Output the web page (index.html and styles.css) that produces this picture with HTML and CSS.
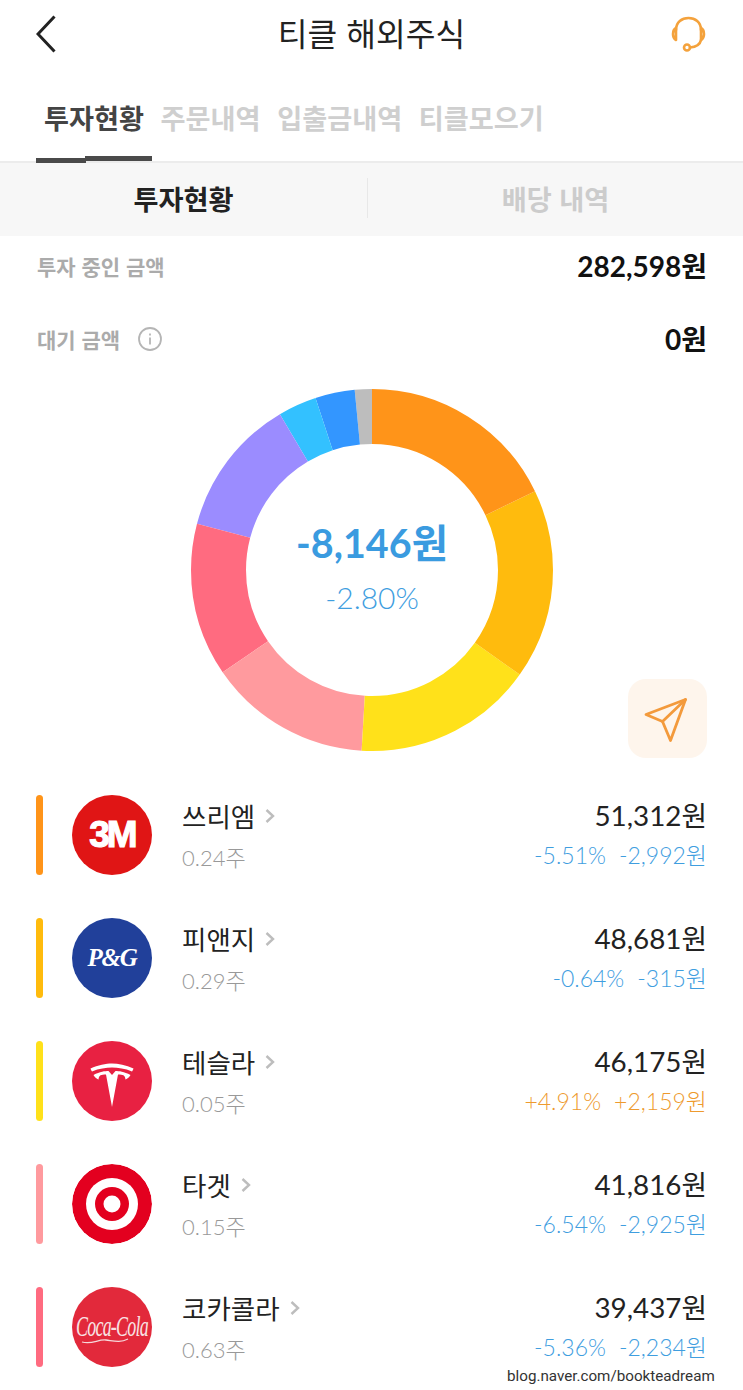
FILE: index.html
```html
<!DOCTYPE html>
<html lang="ko">
<head>
<meta charset="utf-8">
<title>티클 해외주식</title>
<link rel="stylesheet" href="styles.css">
</head>
<body>
<div class="page">
  <header class="topbar">
    <svg class="back" width="20" height="38" viewBox="0 0 20 38"><path d="M18.500 1.500 2 19l16.500 17.500" fill="none" stroke="#222" stroke-width="3"/></svg>
    <h1 class="title">티클 해외주식</h1>
    <svg class="headset" width="38" height="38" viewBox="0 0 38 38" fill="none" stroke="#F4A23C" stroke-width="2.600" stroke-linecap="round" stroke-linejoin="round">
      <path d="M6 15C6 7 12 3 18.500 3S31 7 31 15"/>
      <path d="M6 13C2 15 2 23 6 25z"/>
      <path d="M31 13c4 2 4 10 0 12z"/>
      <path d="M31 25c-1 5-5 7-11 7.500"/>
      <circle cx="17" cy="32.500" r="3"/>
    </svg>
  </header>

  <nav class="tabs">
    <span class="tab tab-on">투자현황</span>
    <span class="tab">주문내역</span>
    <span class="tab">입출금내역</span>
    <span class="tab">티클모으기</span>
  </nav>

  <div class="subtabs">
    <span class="subtab subtab-on">투자현황</span>
    <span class="subtab">배당 내역</span>
  </div>

  <section class="summary">
    <div class="sum-row">
      <span class="sum-label">투자 중인 금액</span>
      <span class="sum-value">282,598원</span>
    </div>
    <div class="sum-row">
      <span class="sum-label">대기 금액
        <svg class="info" width="26" height="26" viewBox="0 0 26 26" fill="none" stroke="#B5B5B5" stroke-width="1.800"><circle cx="13" cy="13" r="11"/><path d="M13 11.500v7"/><path d="M13 7.500v2"/></svg>
      </span>
      <span class="sum-value">0원</span>
    </div>
  </section>

  <section class="chart">
    <div class="donut">
      <svg width="362" height="362" viewBox="0 0 362 362" fill="none" stroke-width="55">
        <g class="ring">
          <circle cx="181" cy="181" r="153.500" pathLength="360" stroke="#BDBDBD" stroke-dasharray="5.500 354.500" stroke-dashoffset="-354.500"/>
          <circle cx="181" cy="181" r="153.500" pathLength="360" stroke="#3396FF" stroke-dasharray="12.700 347.300" stroke-dashoffset="-341.800"/>
          <circle cx="181" cy="181" r="153.500" pathLength="360" stroke="#33C1FF" stroke-dasharray="12.400 347.600" stroke-dashoffset="-329.400"/>
          <circle cx="181" cy="181" r="153.500" pathLength="360" stroke="#9B8CFF" stroke-dasharray="44.600 315.400" stroke-dashoffset="-284.800"/>
          <circle cx="181" cy="181" r="153.500" pathLength="360" stroke="#FF6B80" stroke-dasharray="49.200 310.800" stroke-dashoffset="-235.600"/>
          <circle cx="181" cy="181" r="153.500" pathLength="360" stroke="#FF9A9E" stroke-dasharray="52.300 307.700" stroke-dashoffset="-183.300"/>
          <circle cx="181" cy="181" r="153.500" pathLength="360" stroke="#FFE11A" stroke-dasharray="58 302" stroke-dashoffset="-125.300"/>
          <circle cx="181" cy="181" r="153.500" pathLength="360" stroke="#FFBB0D" stroke-dasharray="61.100 298.900" stroke-dashoffset="-64.200"/>
          <circle cx="181" cy="181" r="153.500" pathLength="360" stroke="#FF9419" stroke-dasharray="64.200 295.800"/>
        </g>
      </svg>
      <div class="donut-center">
        <div class="total">-8,146원</div>
        <div class="total-pct">-2.80%</div>
      </div>
    </div>
    <button class="send" type="button" aria-label="공유">
      <svg width="48" height="48" viewBox="0 0 48 48" fill="none" stroke="#F39A3C" stroke-width="2.800" stroke-linejoin="round" stroke-linecap="round"><path d="M41.500 4.500 2 19.500l16.500 7 8 19z"/><path d="M41.500 4.500 18.500 26.500"/></svg>
    </button>
  </section>

  <ul class="stocks">
    <li class="stock">
      <span class="bar bar-1"></span>
      <span class="logo logo-3m">3M</span>
      <div class="names">
        <div class="name">쓰리엠<svg class="chev" width="10" height="16" viewBox="0 0 10 16"><path d="M1.500 2 8 8l-6.500 6" fill="none" stroke="#BDBDBD" stroke-width="2.400"/></svg></div>
        <div class="qty">0.24주</div>
      </div>
      <div class="nums">
        <div class="amount">51,312원</div>
        <div class="chg down"><span>-5.51%</span><span>-2,992원</span></div>
      </div>
    </li>
    <li class="stock">
      <span class="bar bar-2"></span>
      <span class="logo logo-pg">P&amp;G</span>
      <div class="names">
        <div class="name">피앤지<svg class="chev" width="10" height="16" viewBox="0 0 10 16"><path d="M1.500 2 8 8l-6.500 6" fill="none" stroke="#BDBDBD" stroke-width="2.400"/></svg></div>
        <div class="qty">0.29주</div>
      </div>
      <div class="nums">
        <div class="amount">48,681원</div>
        <div class="chg down"><span>-0.64%</span><span>-315원</span></div>
      </div>
    </li>
    <li class="stock">
      <span class="bar bar-3"></span>
      <span class="logo logo-tesla">
        <svg width="80" height="80" viewBox="0 0 80 80" fill="#fff"><path d="M40 66 46 33.500c5 0 7 .5 7.500 5 0 0 3-1 5-4.500C52 30.500 47 30 43.500 30L40 34l-3.500-4c-3.500 0-8.500.5-15 4 2 3.500 5 4.500 5 4.500.5-4.500 2.500-5 7.500-5z"/><path d="M40 26.500c6 0 13 1 20 4 1-1.500 1.500-3 1.500-3C54 24 46 22.500 40 22.500S26 24 18.500 27.500c0 0 .5 1.500 1.500 3 7-3 14-4 20-4z"/></svg>
      </span>
      <div class="names">
        <div class="name">테슬라<svg class="chev" width="10" height="16" viewBox="0 0 10 16"><path d="M1.500 2 8 8l-6.500 6" fill="none" stroke="#BDBDBD" stroke-width="2.400"/></svg></div>
        <div class="qty">0.05주</div>
      </div>
      <div class="nums">
        <div class="amount">46,175원</div>
        <div class="chg up"><span>+4.91%</span><span>+2,159원</span></div>
      </div>
    </li>
    <li class="stock">
      <span class="bar bar-4"></span>
      <span class="logo logo-target">
        <svg width="80" height="80" viewBox="0 0 80 80"><circle cx="40" cy="40" r="40" fill="#E3001F"/><circle cx="40" cy="40" r="26" fill="#fff"/><circle cx="40" cy="40" r="17" fill="#E3001F"/><circle cx="40" cy="40" r="8.500" fill="#fff"/></svg>
      </span>
      <div class="names">
        <div class="name">타겟<svg class="chev" width="10" height="16" viewBox="0 0 10 16"><path d="M1.500 2 8 8l-6.500 6" fill="none" stroke="#BDBDBD" stroke-width="2.400"/></svg></div>
        <div class="qty">0.15주</div>
      </div>
      <div class="nums">
        <div class="amount">41,816원</div>
        <div class="chg down"><span>-6.54%</span><span>-2,925원</span></div>
      </div>
    </li>
    <li class="stock">
      <span class="bar bar-5"></span>
      <span class="logo logo-coke"><span class="coke-word">Coca-Cola</span><svg class="swoosh" width="66" height="10" viewBox="0 0 66 10"><path d="M2 7c10 3 16-3 24-2s14 3 22-1" fill="none" stroke="#F6D9DB" stroke-width="1.300"/></svg></span>
      <div class="names">
        <div class="name">코카콜라<svg class="chev" width="10" height="16" viewBox="0 0 10 16"><path d="M1.500 2 8 8l-6.500 6" fill="none" stroke="#BDBDBD" stroke-width="2.400"/></svg></div>
        <div class="qty">0.63주</div>
      </div>
      <div class="nums">
        <div class="amount">39,437원</div>
        <div class="chg down"><span>-5.36%</span><span>-2,234원</span></div>
      </div>
    </li>
  </ul>

  <div class="watermark">blog.naver.com/bookteadream</div>
</div>
</body>
</html>
```
FILE: styles.css
```css
* { box-sizing: border-box; }
html, body { margin: 0; padding: 0; background: #fff; }
body { font-family: Lato, "Noto Sans CJK KR", sans-serif; color: #222; }
.page { position: relative; width: 743px; height: 1390px; overflow: hidden; }

.topbar { position: relative; display: flex; align-items: center; justify-content: space-between; height: 70px; padding: 0 36px 2px; }
.title { position: absolute; left: 0; right: 0; top: 11px; margin: 0; text-align: center; font-family: "Noto Sans CJK KR", sans-serif; font-weight: 400; font-size: 32.300px; line-height: 42px; color: #222; }
.headset { margin-right: -1px; }

.tabs { position: relative; display: flex; gap: 16.500px; height: 93px; padding: 25px 0 0 44px; border-bottom: 2px solid #ECECEC; }
.tab { font-family: "Noto Sans CJK KR", sans-serif; font-size: 27.200px; line-height: 44px; font-weight: 700; color: #CFCFCF; white-space: nowrap; }
.tab-on { color: #444; }
.tabs::before { content: ""; position: absolute; left: 36px; bottom: -2px; width: 50px; height: 5px; background: #4A4A4A; }
.tabs::after { content: ""; position: absolute; left: 85px; bottom: 0; width: 67px; height: 5px; background: #4A4A4A; }

.subtabs { display: grid; grid-template-columns: 368px 1fr; height: 73px; padding-bottom: 4px; background: #F7F7F7; align-items: center; }
.subtab { position: relative; font-family: "Noto Sans CJK KR", sans-serif; text-align: center; font-size: 27.200px; line-height: 40px; font-weight: 700; color: #CCCCCC; }
.subtab-on { color: #222; border-right: 1px solid #E8E8E8; }

.summary { padding: 0 37px; }
.sum-row { display: flex; justify-content: space-between; align-items: center; height: 70px; }
.sum-row:first-child { height: 60px; margin-bottom: 8px; }
.sum-label { display: flex; align-items: center; gap: 17px; font-family: "Noto Sans CJK KR", sans-serif; font-size: 21px; font-weight: 700; color: #ABABAB; }
.sum-value { font-family: Lato, "Noto Sans CJK KR", sans-serif; font-size: 28px; font-weight: 700; color: #111; margin-right: -1px; padding-bottom: 3px; }

.chart { position: relative; height: 421px; padding: 15px 0 0 191px; }
.donut { position: relative; width: 362px; height: 362px; }
.ring { transform: rotate(-90deg); transform-origin: 181px 181px; }
.donut-center { position: absolute; inset: 0; display: flex; flex-direction: column; align-items: center; justify-content: center; padding-bottom: 8px; }
.total { font-size: 39.500px; line-height: 52px; font-weight: 700; color: #3A9BE0; }
.total-pct { margin-top: 10px; font-size: 30px; line-height: 36px; font-weight: 300; color: #3F9EDF; }
.send { position: absolute; left: 628px; top: 305px; display: flex; align-items: center; justify-content: center; width: 79px; height: 79px; padding: 0; border: 0; border-radius: 18px; background: #FEF5EC; }

.stocks { list-style: none; margin: 0; padding: 0 36px; display: flex; flex-direction: column; gap: 43px; }
.stock { display: flex; align-items: stretch; height: 80px; }
.bar { flex: none; width: 7px; height: 80px; border-radius: 4px; }
.bar-1 { background: #FF9419; }
.bar-2 { background: #FFBB0D; }
.bar-3 { background: #FFE11A; }
.bar-4 { background: #FF9A9E; }
.bar-5 { background: #FF6B80; }
.logo { position: relative; flex: none; display: flex; align-items: center; justify-content: center; width: 80px; height: 80px; margin: 0 30px 0 29px; border-radius: 50%; overflow: hidden; color: #fff; }
.logo-3m { background: #E01515; font-family: "Liberation Sans", sans-serif; font-weight: 700; font-size: 37px; letter-spacing: -3px; -webkit-text-stroke: 1.200px #fff; }
.logo-pg { background: #21409A; font-family: "Liberation Serif", serif; font-style: italic; font-weight: 700; font-size: 25px; letter-spacing: -1.300px; }
.logo-tesla { background: #E82142; }
.logo-coke { background: #E2293B; font-family: "Liberation Serif", serif; font-style: italic; white-space: nowrap; color: #F8E2E3; }
.coke-word { display: block; font-size: 23px; letter-spacing: -1px; transform: scale(.78, 1.250); }
.swoosh { position: absolute; left: 8px; top: 48px; }
.names { flex: 1; min-width: 0; }
.name { display: flex; align-items: center; gap: 10px; height: 42px; font-family: "Noto Sans CJK KR", sans-serif; font-size: 26.500px; line-height: 42px; color: #222; }
.qty { margin-top: 4px; font-size: 22px; line-height: 34px; font-weight: 300; color: #999; }
.nums { text-align: right; }
.amount { height: 42px; font-size: 27.800px; line-height: 42px; color: #222; }
.chg { display: flex; justify-content: flex-end; gap: 13px; margin-top: 1px; font-size: 23px; line-height: 34px; font-weight: 300; }
.down { color: #3F9EDF; }
.up { color: #EE9A2E; }

.watermark { position: absolute; left: 507px; top: 1367px; font-family: Roboto, sans-serif; font-size: 15.200px; line-height: 18px; color: #333; white-space: nowrap; }
```
